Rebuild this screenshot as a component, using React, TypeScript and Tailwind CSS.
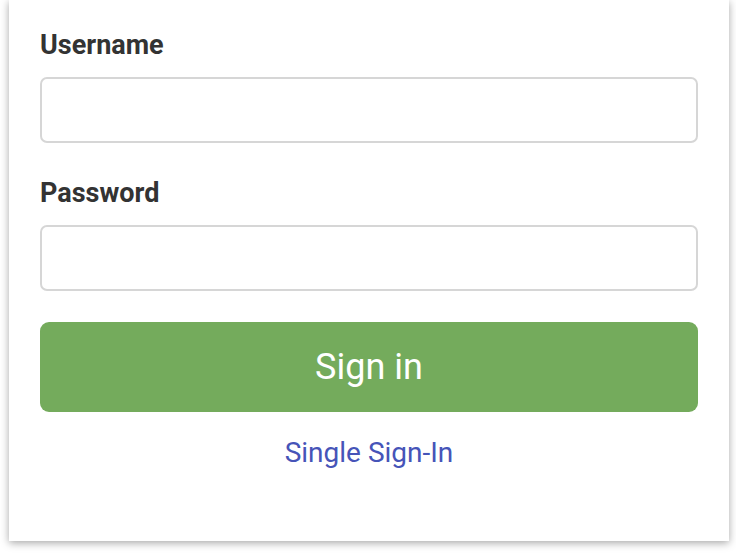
export default function App() {
  return (
    <div className="min-h-[554px] bg-white pl-[9px] pr-[7px]" style={{ fontFamily: "Roboto, 'Liberation Sans', sans-serif" }}>
      <div className="bg-white shadow-[0_2px_8px_rgba(0,0,0,0.35)] px-[31px] pt-[29px] pb-[72px]">
        {/* Username */}
        <label className="block text-[27px] leading-[32px] font-bold text-[#333333]">Username</label>
        <input
          type="text"
          className="mt-[16px] block w-full h-[66px] rounded-[7px] border-2 border-[#d6d6d6] bg-white px-3 outline-none"
        />

        {/* Password */}
        <label className="mt-[34px] block text-[27px] leading-[32px] font-bold text-[#333333]">Password</label>
        <input
          type="password"
          className="mt-[16px] block w-full h-[66px] rounded-[7px] border-2 border-[#d6d6d6] bg-white px-3 outline-none"
        />

        <button className="mt-[31px] flex h-[90px] w-full items-center justify-center rounded-[9px] bg-[#74ab5c] text-[36px] text-white">
          Sign in
        </button>

        <div className="mt-[25px] flex justify-center">
          <a href="#" className="text-[28px] leading-[32px] text-[#4654b8]">Single Sign-In</a>
        </div>
      </div>
    </div>
  );
}
